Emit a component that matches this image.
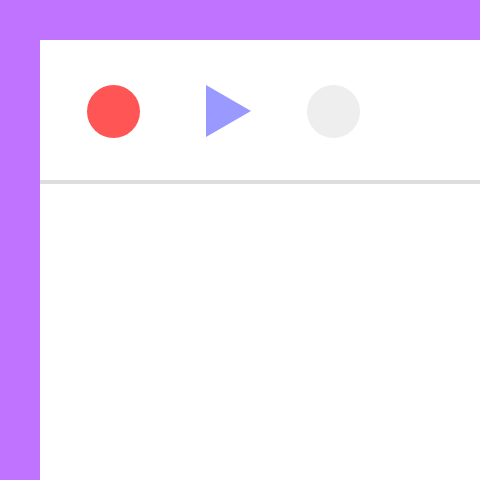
<script lang="ts">
	let playing = false;
</script>

<div class="page">
	<main class="panel">
		<header class="toolbar">
			<button class="record" aria-label="Record"></button>
			<button class="play" aria-label="Play" class:playing on:click={() => (playing = !playing)}>
				<svg width="45" height="52" viewBox="0 0 45 52">
					<polygon points="0,0 45,26 0,52" />
				</svg>
			</button>
			<button class="stop" aria-label="Stop"></button>
		</header>
	</main>
</div>

<style>
	:global(body) {
		margin: 0;
	}

	.page {
		box-sizing: border-box;
		width: 480px;
		height: 480px;
		padding: 40px 0 0 40px;
		background-color: #bf73ff;
		overflow: hidden;
	}

	.panel {
		height: 100%;
		background-color: #fff;
	}

	.toolbar {
		box-sizing: border-box;
		display: flex;
		align-items: center;
		height: 144px;
		padding: 2.67px 0 0 46.67px;
		border-bottom: 4px solid #ddd;
	}

	button {
		flex: none;
		padding: 0;
		border: none;
		background: none;
		cursor: pointer;
	}

	.record,
	.stop {
		width: 53.33px;
		height: 53.33px;
		border-radius: 50%;
	}

	.record {
		background-color: #f55;
	}

	.play {
		display: flex;
		margin-left: 66px;
	}

	.play svg {
		display: block;
		fill: #99f;
	}

	.stop {
		margin-left: 55.67px;
		background-color: #eee;
	}
</style>
